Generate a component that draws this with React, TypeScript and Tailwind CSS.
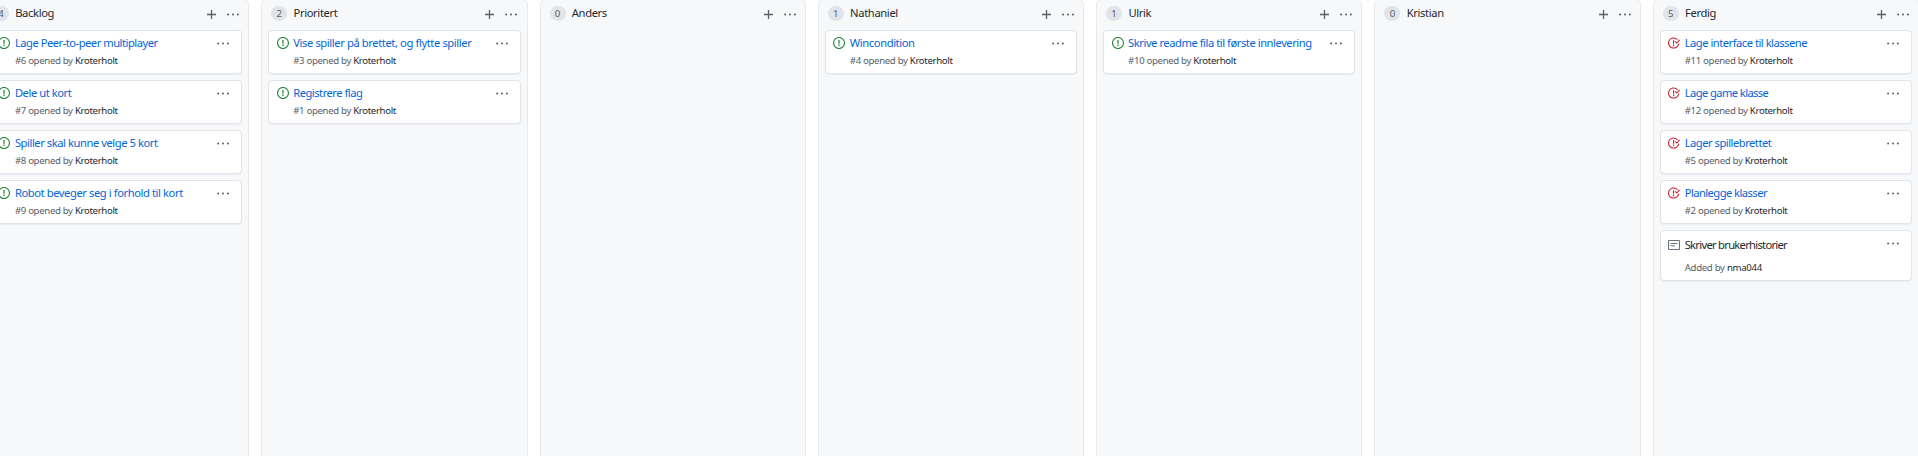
import React from "react";

type Item = {
  kind: "open" | "closed" | "note";
  title: string;
  tracking: string;
  number?: number;
  author: string;
};

type Column = { name: string; count: number; items: Item[] };

const issue = (
  kind: "open" | "closed",
  title: string,
  number: number,
  tracking = "tracking-[-0.46px]",
): Item => ({ kind, title, number, tracking, author: "Kroterholt" });

const columns: Column[] = [
  {
    name: "Backlog",
    count: 4,
    items: [
      issue("open", "Lage Peer-to-peer multiplayer", 6, "tracking-[-0.5px]"),
      issue("open", "Dele ut kort", 7),
      issue("open", "Spiller skal kunne velge 5 kort", 8, "tracking-[-0.45px]"),
      issue("open", "Robot beveger seg i forhold til kort", 9, "tracking-[-0.42px]"),
    ],
  },
  {
    name: "Prioritert",
    count: 2,
    items: [
      issue("open", "Vise spiller på brettet, og flytte spiller", 3, "tracking-[-0.4px]"),
      issue("open", "Registrere flag", 1, "tracking-[-0.5px]"),
    ],
  },
  { name: "Anders", count: 0, items: [] },
  {
    name: "Nathaniel",
    count: 1,
    items: [issue("open", "Wincondition", 4, "tracking-[-0.4px]")],
  },
  {
    name: "Ulrik",
    count: 1,
    items: [
      issue("open", "Skrive readme fila til første innlevering", 10, "tracking-[-0.46px]"),
    ],
  },
  { name: "Kristian", count: 0, items: [] },
  {
    name: "Ferdig",
    count: 5,
    items: [
      issue("closed", "Lage interface til klassene", 11, "tracking-[-0.5px]"),
      issue("closed", "Lage game klasse", 12, "tracking-[-0.6px]"),
      issue("closed", "Lager spillebrettet", 5, "tracking-[-0.5px]"),
      issue("closed", "Planlegge klasser", 2, "tracking-[-0.56px]"),
      {
        kind: "note",
        title: "Skriver brukerhistorier",
        tracking: "tracking-[-0.72px]",
        author: "nma044",
      },
    ],
  },
];

function StatusIcon({ kind }: { kind: Item["kind"] }) {
  if (kind === "open") {
    return (
      <svg viewBox="0 1 14 14" className="h-3 w-3 fill-[#22863a]">
        <path d="M7 2.3c3.14 0 5.7 2.56 5.7 5.7s-2.56 5.7-5.7 5.7A5.71 5.71 0 0 1 1.3 8c0-3.14 2.56-5.7 5.7-5.7zM7 1C3.14 1 0 4.14 0 8s3.14 7 7 7 7-3.14 7-7-3.14-7-7-7zm.75 3.6h-1.5v4.2h1.5V4.6zm0 5.2h-1.5v1.6h1.5V9.8z" />
      </svg>
    );
  }
  if (kind === "closed") {
    return (
      <svg viewBox="1 0.5 15 15" className="h-3 w-3 fill-[#cb2431]">
        <path d="M7.25 10h1.5v1.7h-1.5V10zm1.5-5.5h-1.5v4.3h1.5V4.5zM10.5 5.5l-1 1L12 9l4-4.5-1-1L12 7l-1.5-1.5zM8 13.7A5.71 5.71 0 0 1 2.3 8c0-3.14 2.56-5.7 5.7-5.7 1.83 0 3.45.88 4.5 2.2l.92-.92A6.947 6.947 0 0 0 8 1C4.14 1 1 4.14 1 8s3.14 7 7 7 7-3.14 7-7l-1.52 1.52c-.66 2.41-2.86 4.19-5.48 4.19v-.01z" />
      </svg>
    );
  }
  return (
    <svg viewBox="0 0 12 12" className="h-3 w-3 fill-none stroke-[#6a737d]">
      <rect x="0.5" y="1.5" width="11" height="9" rx="0.6" strokeWidth="1.1" />
      <path d="M2.5 4.5h7M2.5 6.8h4.5" strokeWidth="1" />
    </svg>
  );
}

function Dots() {
  return (
    <svg viewBox="0 0 12 3" className="h-[3px] w-3 shrink-0 fill-[#586069]">
      <circle cx="1.1" cy="1.5" r="1" />
      <circle cx="6" cy="1.5" r="1" />
      <circle cx="10.9" cy="1.5" r="1" />
    </svg>
  );
}

function Card({ item }: { item: Item }) {
  const note = item.kind === "note";
  return (
    <article
      className={`flex rounded-[4px] border border-[#e1e4e8] bg-white pl-[7.5px] pr-[12px] shadow-[0_1px_1px_rgba(149,157,165,0.12)] ${
        note ? "h-[51px]" : "h-[44px]"
      }`}
    >
      <div className={`w-[16.5px] shrink-0 ${note ? "pt-[8px]" : "pt-[6px]"}`}>
        <StatusIcon kind={item.kind} />
      </div>
      <div className={`min-w-0 flex-1 whitespace-nowrap ${note ? "pt-[5px]" : "pt-[3px]"}`}>
        <h4
          className={`text-[11.2px] leading-[17px] ${item.tracking} ${
            note ? "text-[#24292e]" : "text-[#0366d6]"
          }`}
        >
          {item.title}
        </h4>
        <p
          className={`text-[9.6px] leading-[14px] text-[#586069] ${
            note ? "mt-[8px] tracking-[-0.29px]" : "mt-[3px] tracking-[-0.32px]"
          }`}
        >
          {note ? "Added by " : `#${item.number} opened by `}
          <span className="text-[#24292e]">{item.author}</span>
        </p>
      </div>
      <div className="pt-[10.6px]">
        <Dots />
      </div>
    </article>
  );
}

function BoardColumn({ column }: { column: Column }) {
  return (
    <section className="-mt-px h-[470px] w-[266.3px] shrink-0 rounded-[5px] border border-[#e7eaed] bg-[#f6f8fa] px-[6px]">
      <header className="flex h-[30px] items-start pl-[3px] pr-[3.2px]">
        <span className="mt-[6px] flex h-[15px] w-[16px] items-center justify-center rounded-full bg-[#e1e4e8] text-[9.6px] leading-none text-[#586069]">
          {column.count}
        </span>
        <h3 className="ml-[6.3px] mt-[4px] flex-1 text-[11.2px] leading-[17px] tracking-[-0.36px] text-[#24292e]">
          {column.name}
        </h3>
        <svg viewBox="0 0 9 9" className="mt-[10px] h-[9px] w-[9px] stroke-[#586069]">
          <path d="M4.5 0v9M0 4.5h9" strokeWidth="1.3" />
        </svg>
        <div className="ml-[11px] mt-[13px] flex">
          <Dots />
        </div>
      </header>
      <div className="flex flex-col gap-[6px]">
        {column.items.map((item) => (
          <Card key={item.title} item={item} />
        ))}
      </div>
    </section>
  );
}

export default function App() {
  return (
    <main className="h-[456px] w-full overflow-hidden bg-white font-['Noto_Sans',sans-serif]">
      <div className="-ml-[17.1px] flex gap-3">
        {columns.map((column) => (
          <BoardColumn key={column.name} column={column} />
        ))}
      </div>
    </main>
  );
}
